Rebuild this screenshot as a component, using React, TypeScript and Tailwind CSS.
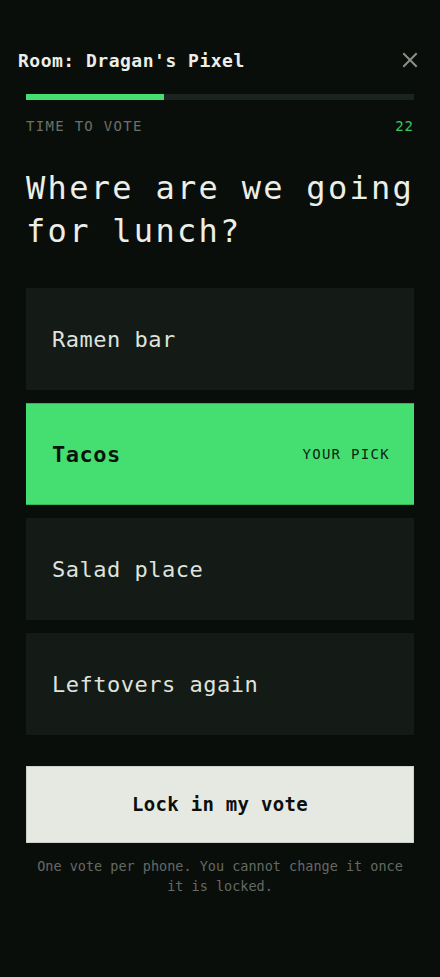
import { useState } from 'react'

const OPTIONS = ['Ramen bar', 'Tacos', 'Salad place', 'Leftovers again']

export default function App() {
  const [pick, setPick] = useState('Tacos')
  const secondsLeft = 22
  const progress = 35.6

  return (
    <div
      className="min-h-[977px] w-[440px] bg-[#0a0e0b] text-[#e6e9e2]"
      style={{ fontFamily: '"DejaVu Sans Mono", "Liberation Mono", monospace' }}
    >
      <header className="flex h-[60px] items-end justify-between pl-[18px] pr-[22px]">
        <h1 className="translate-y-[10px] text-[18px] font-bold leading-none tracking-[0.5px] text-[#eceee8]">
          Room: Dragan&apos;s Pixel
        </h1>
        <button className="translate-y-[8px] text-[#8a9088]" aria-label="Close">
          <svg width="16" height="16" viewBox="0 0 16 16" fill="none" stroke="currentColor" strokeWidth="2" strokeLinecap="square">
            <path d="M2 2 L14 14 M14 2 L2 14" />
          </svg>
        </button>
      </header>

      <main className="px-[26px]">
        <div className="mt-[34px] h-[6px] w-full bg-[#1b241e]">
          <div className="h-full bg-[#45de71]" style={{ width: `${progress}%` }} />
        </div>

        <div className="mt-[18px] flex items-center justify-between text-[14px] leading-[16px] tracking-[1.3px]">
          <span className="text-[#6b7069]">TIME TO VOTE</span>
          <span className="tracking-[1px] text-[#3fc563]">{secondsLeft}</span>
        </div>

        <h2 className="mr-[-14px] mt-[33px] text-[32px] leading-[43px] tracking-[2.3px] text-[#eceee8]">
          Where are we going for lunch?
        </h2>

        <ul className="mt-[35px] flex flex-col gap-[13px]">
          {OPTIONS.map((o) => {
            const active = o === pick
            return (
              <li key={o}>
                <button
                  onClick={() => setPick(o)}
                  className={
                    active
                      ? 'flex h-[102px] w-full items-center justify-between border-y border-[#33b757] bg-[#45de71] pl-[26px] pr-[24px] text-left text-[#0a140c]'
                      : 'flex h-[102px] w-full items-center justify-between bg-[#141a16] pl-[26px] pr-[24px] text-left text-[#dfe3db]'
                  }
                >
                  <span className={active ? 'text-[22px] font-bold tracking-[0.5px]' : 'text-[22px] tracking-[0.5px]'}>{o}</span>
                  {active && <span className="text-[14px] tracking-[1.3px] text-[#0d2412]">YOUR PICK</span>}
                </button>
              </li>
            )
          })}
        </ul>

        <button className="mt-[31px] flex h-[77px] w-full items-center justify-center border border-[#cdd1ca] bg-[#e6e9e2] text-[19px] font-bold tracking-[0.3px] text-[#0c0f0c]">
          Lock in my vote
        </button>

        <p className="mt-[13px] px-2 text-center text-[13.5px] leading-[20px] text-[#646a63]">
          One vote per phone. You cannot change it once it is locked.
        </p>
      </main>
    </div>
  )
}
